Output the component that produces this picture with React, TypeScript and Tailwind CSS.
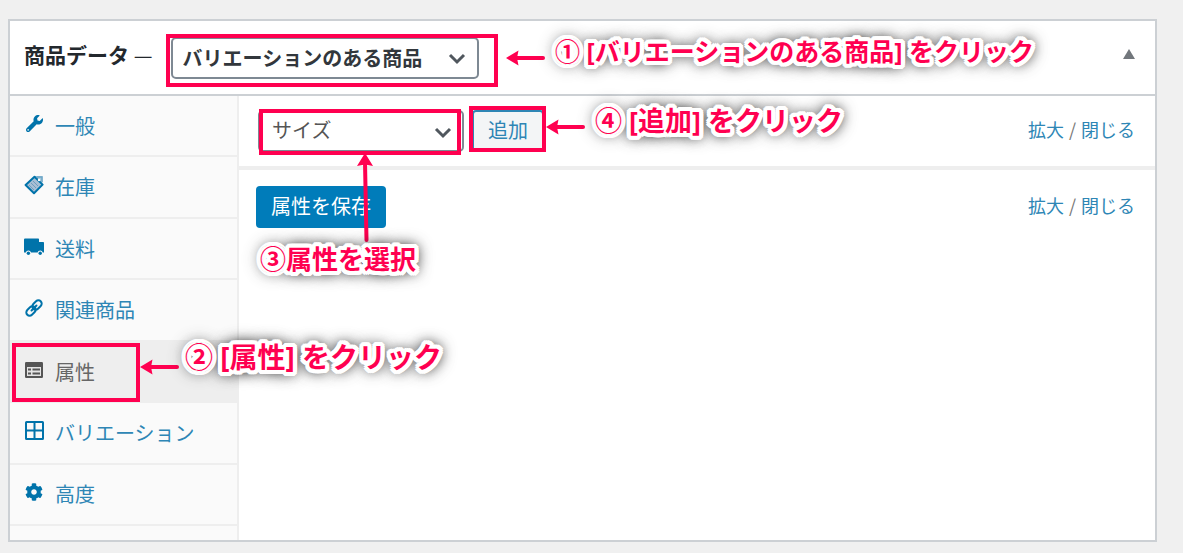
import type { ReactNode } from "react";
import { FaCog, FaWrench } from "react-icons/fa";

interface Tab {
  label: string;
  icon: ReactNode;
  active?: boolean;
}

function TagIcon() {
  return (
    <svg viewBox="0 0 20 20" className="w-[20px] h-[20px]">
      <path d="M10 1H18.500V9Z" fill="#a3c6da" />
      <path d="M10.500 1.800L18.600 9.600L10 18.200L1.600 10Z" fill="#a9bfd4" stroke="currentColor" strokeWidth="2" strokeLinejoin="round" />
      <path d="M5 10l5 5M7 8l5 5M9 6l5 5" stroke="#6f9dc0" strokeWidth="1" />
      <path d="M12.500 2h5.500v5" stroke="#6ea6c8" strokeWidth="1.500" fill="none" />
      <circle cx="15" cy="5" r="1.200" fill="#fff" />
    </svg>
  );
}

function TruckIcon() {
  return (
    <svg viewBox="0 0 20 20" className="w-[20px] h-[20px]" fill="currentColor">
      <path d="M0 2.400C0 1.900.4 1.500 1 1.500h13c.6 0 1 .4 1 .9V5h4c.6 0 1 .4 1 1v9.500h-1.200a2.700 2.700 0 0 0-5.200 0H7a2.700 2.700 0 0 0-5.200 0H0z" />
      <circle cx="4.400" cy="16.300" r="1.700" />
      <circle cx="16.200" cy="16.300" r="1.700" />
    </svg>
  );
}

function LinkIcon() {
  return (
    <svg viewBox="0 0 20 20" className="w-[20px] h-[20px]" fill="none" stroke="currentColor" strokeWidth="2">
      <g transform="rotate(-45 10 10)">
        <rect x="0.500" y="6.700" width="10.500" height="6.600" rx="3.300" />
        <rect x="9" y="6.700" width="10.500" height="6.600" rx="3.300" />
        <path d="M6.500 10h7" strokeLinecap="round" />
      </g>
    </svg>
  );
}

function FormIcon() {
  return (
    <svg viewBox="0 0 20 20" className="w-[20px] h-[20px]">
      <rect x="1" y="2" width="18" height="16" rx="1.200" fill="currentColor" />
      <rect x="3" y="7" width="14" height="9" fill="#e4e4e4" />
      <path d="M4 9.500h3M4 13.500h3M8.500 9.500h7.500M8.500 13.500h7.500" stroke="currentColor" strokeWidth="2" />
    </svg>
  );
}

function GridIcon() {
  return (
    <svg viewBox="0 0 20 20" className="w-[20px] h-[20px]" fill="none" stroke="currentColor" strokeWidth="2">
      <rect x="2" y="1" width="17" height="17" rx="0.500" />
      <path d="M10.500 1v17M2 9.500h17" />
    </svg>
  );
}

const tabs: Tab[] = [
  { label: "一般", icon: <FaWrench className="w-[17px] h-[17px]" /> },
  { label: "在庫", icon: <TagIcon /> },
  { label: "送料", icon: <TruckIcon /> },
  { label: "関連商品", icon: <LinkIcon /> },
  { label: "属性", icon: <FormIcon />, active: true },
  { label: "バリエーション", icon: <GridIcon /> },
  { label: "高度", icon: <FaCog className="w-[18px] h-[18px]" /> },
];

function Chevron({ className }: { className: string }) {
  return (
    <svg viewBox="0 0 18 12" className={`absolute pointer-events-none w-[18px] h-[12px] ${className}`} fill="none" stroke="#50575e" strokeWidth="3">
      <path d="M2 2l7 7 7-7" />
    </svg>
  );
}

function ToggleLinks() {
  return (
    <div className="flex items-center gap-[5px] pb-[4px] text-[18px] leading-[24px] text-[#777]">
      <a href="#expand" className="text-[#2e86b5]">拡大</a>
      <span>/</span>
      <a href="#close" className="text-[#2e86b5]">閉じる</a>
    </div>
  );
}

// Red frame around the control that a step refers to
function Frame({ className }: { className: string }) {
  return <div className={`absolute pointer-events-none border-4 border-[#ff0050] ${className}`} />;
}

function LeftArrow({ className }: { className: string }) {
  return (
    <svg viewBox="0 0 42 16" className={`absolute pointer-events-none w-[42px] h-[16px] ${className}`}>
      <path d="M8 8h29" stroke="#ff0050" strokeWidth="4" strokeLinecap="round" />
      <path d="M0 8L12.500 .5L11 8L12.500 15.500Z" fill="#ff0050" />
    </svg>
  );
}

function Step({ className, children }: { className: string; children: ReactNode }) {
  return (
    <div
      className={`absolute pointer-events-none whitespace-nowrap font-['Noto_Sans','Noto_Sans_CJK_JP',sans-serif] font-bold leading-[36px] text-[#ff0050] [text-shadow:4px_0_0_#fff,-4px_0_0_#fff,0_4px_0_#fff,0_-4px_0_#fff,3px_3px_0_#fff,-3px_3px_0_#fff,3px_-3px_0_#fff,-3px_-3px_0_#fff,4px_2px_0_#fff,-4px_2px_0_#fff,4px_-2px_0_#fff,-4px_-2px_0_#fff,2px_4px_0_#fff,-2px_4px_0_#fff,2px_-4px_0_#fff,-2px_-4px_0_#fff,2px_0_0_#fff,-2px_0_0_#fff,0_2px_0_#fff,0_-2px_0_#fff,0_0_12px_#000,0_0_16px_#222,0_0_18px_#444] ${className}`}
    >
      {children}
    </div>
  );
}

export default function App() {
  return (
    <div className="relative min-h-screen bg-[#f0f0f0] pt-[19px] pl-[8px] pr-[26px] pb-[10px] font-['Noto_Sans_CJK_JP',sans-serif] text-[20px] leading-[28px]">
      <section className="border-2 border-[#ccd0d4] bg-white">
        {/* Header */}
        <header className="flex items-center h-[75px] pb-[8px] pl-[14px] pr-[20px] border-b-2 border-[#ccd0d4]">
          <label htmlFor="product-type" className="font-bold text-[21px] text-[#23282d] whitespace-nowrap">
            商品データ <span className="font-normal">—</span>
          </label>
          <div className="relative ml-[18px] mt-[8px]">
            <select
              id="product-type"
              className="appearance-none block w-[308px] h-[42px] pl-[10px] rounded-[5px] border-2 border-[#7e8993] bg-white font-bold text-[#32373c]"
            >
              <option>バリエーションのある商品</option>
            </select>
            <Chevron className="right-[13px] top-[16px]" />
          </div>
          <button type="button" aria-label="折りたたむ" className="ml-auto">
            <svg viewBox="0 0 12 10" className="w-[12px] h-[10px]" fill="#72777c">
              <path d="M6 0l6 10H0z" />
            </svg>
          </button>
        </header>

        <div className="flex min-h-[444px]">
          {/* Tabs */}
          <nav className="w-[229px] shrink-0 bg-[#fafafa] border-r-2 border-[#eee]">
            <ul className="grid grid-rows-7 h-[430px]">
              {tabs.map((tab) => (
                <li key={tab.label} className={tab.active ? "bg-[#eee]" : "border-b-2 border-[#eee]"}>
                  <a
                    href="#tab"
                    className={`flex items-center h-full pl-[14px] gap-[11px] ${tab.active ? "text-[#555]" : "text-[#0073aa]"}`}
                  >
                    <span className="flex justify-center w-[20px] pb-[4px]">{tab.icon}</span>
                    <span className={tab.active ? "text-[#666]" : "text-[#2e86b5]"}>{tab.label}</span>
                  </a>
                </li>
              ))}
            </ul>
          </nav>

          {/* Attributes */}
          <div className="flex-1">
            <div className="flex items-center h-[74px] pl-[19px] pr-[20px] border-b-4 border-[#eee]">
              <div className="relative">
                <select
                  aria-label="属性"
                  className="appearance-none block w-[206px] h-[42px] pl-[12px] pb-[2px] rounded-[5px] border-2 border-[#7e8993] bg-white text-[#555]"
                >
                  <option>サイズ</option>
                </select>
                <Chevron className="right-[12px] top-[17px]" />
              </div>
              <button type="button" className="ml-[8px] w-[72px] h-[42px] pb-[2px] rounded-[4px] border-2 border-[#2e86b5] bg-[#f3f5f6] text-[#2e86b5]">
                追加
              </button>
              <div className="ml-auto">
                <ToggleLinks />
              </div>
            </div>
            <div className="flex items-center h-[74px] pl-[17px] pr-[20px]">
              <button type="button" className="w-[130px] h-[42px] pb-[2px] rounded-[4px] bg-[#007cba] text-white">
                属性を保存
              </button>
              <div className="ml-auto">
                <ToggleLinks />
              </div>
            </div>
          </div>
        </div>
      </section>

      {/* Step annotations */}
      <Frame className="left-[166px] top-[34px] w-[332px] h-[53px]" />
      <LeftArrow className="left-[506px] top-[50px]" />
      <Step className="left-[555px] top-[33px] text-[25px]">① [バリエーションのある商品] をクリック</Step>

      <Frame className="left-[12px] top-[343px] w-[128px] h-[59px]" />
      <LeftArrow className="left-[140px] top-[359px]" />
      <Step className="left-[185px] top-[339px] text-[28px]">② [属性] をクリック</Step>

      <Frame className="left-[259px] top-[109px] w-[202px] h-[46px]" />
      <svg viewBox="0 0 16 90" className="absolute pointer-events-none left-[357px] top-[153px] w-[16px] h-[90px]">
        <path d="M8 9l1.500 78" stroke="#ff0050" strokeWidth="4" strokeLinecap="round" />
        <path d="M8 0L16 13L8 11.500L0 13Z" fill="#ff0050" />
      </svg>
      <Step className="left-[260px] top-[241px] text-[26px]">③属性を選択</Step>

      <Frame className="left-[469px] top-[106px] w-[77px] h-[46px]" />
      <LeftArrow className="left-[546px] top-[119px]" />
      <Step className="left-[595px] top-[103px] text-[27px]">④ [追加] をクリック</Step>
    </div>
  );
}
